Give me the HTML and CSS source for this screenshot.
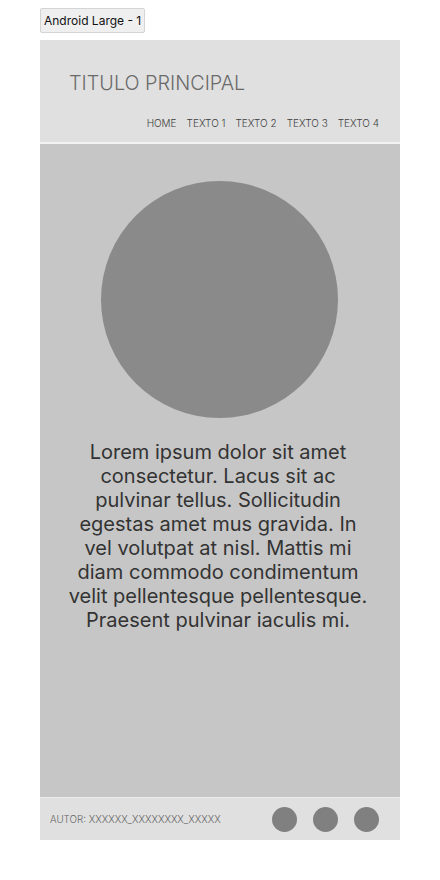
FILE: index.html
```html
<!DOCTYPE html>
<html lang="es">
<head>
<meta charset="utf-8">
<link rel="stylesheet" href="styles.css">
</head>
<body>
<div class="canvas">
  <div class="label">Android Large - 1</div>
  <div class="frame">
    <header class="header">
      <h1 class="title">TITULO PRINCIPAL</h1>
      <nav class="nav">
        <span>HOME</span><span>TEXTO 1</span><span>TEXTO 2</span><span>TEXTO 3</span><span>TEXTO 4</span>
      </nav>
    </header>
    <main class="main">
      <div class="circle"></div>
      <p class="text">Lorem ipsum dolor sit amet consectetur. Lacus sit ac pulvinar tellus. Sollicitudin egestas amet mus gravida. In vel volutpat at nisl. Mattis mi diam commodo condimentum velit pellentesque pellentesque. Praesent pulvinar iaculis mi.</p>
    </main>
    <footer class="footer">
      <span class="author">AUTOR: XXXXXX_XXXXXXXX_XXXXX</span>
      <div class="dots"><span class="dot"></span><span class="dot"></span><span class="dot"></span></div>
    </footer>
  </div>
</div>
</body>
</html>
```
FILE: styles.css
```css
* { box-sizing: border-box; }
html, body { margin: 0; padding: 0; background: #fff; }
body { font-family: Inter, "Noto Sans", sans-serif; }
.canvas { padding: 8px 40px 40px 40px; }
.label {
  display: inline-block;
  height: 25px;
  padding: 0 3px;
  background: #efefef;
  border: 1px solid #d4d4d4;
  border-radius: 2px;
  font-size: 12px;
  line-height: 23px;
  color: #111;
  margin-bottom: 7px;
}
.frame { width: 360px; height: 800px; display: flex; flex-direction: column; }
.header {
  height: 104px;
  flex: none;
  background: #e0e0e0;
  border-bottom: 2px solid #f2f2f2;
  padding: 31px 21px 0 29px;
  display: flex;
  flex-direction: column;
}
.title {
  margin: 0;
  font-weight: 300;
  font-size: 19.8px;
  line-height: 24px;
  color: #6a6a6a;
}
.nav {
  margin-top: 21px;
  display: flex;
  justify-content: flex-end;
  gap: 10px;
  font-size: 10px;
  line-height: 14px;
  color: #3e3e3e;
  font-weight: 300;
}
.main {
  flex: 1;
  background: #c6c6c6;
  display: flex;
  flex-direction: column;
  align-items: center;
  padding-top: 37px;
  border-bottom: 1px solid #ececec;
}
.circle {
  width: 237px;
  height: 237px;
  border-radius: 50%;
  background: #8a8a8a;
  margin-right: 1px;
}
.text {
  margin: 22px 4px 0 0;
  width: 302px;
  text-align: center;
  font-size: 20px;
  line-height: 24px;
  color: #333;
}
.footer {
  height: 42px;
  flex: none;
  background: #e0e0e0;
  display: flex;
  align-items: center;
  justify-content: space-between;
  padding: 0 21px 0 10px;
}
.author { font-size: 9.8px; color: #666; font-weight: 300; }
.dots { display: flex; gap: 16px; }
.dot { width: 25px; height: 25px; border-radius: 50%; background: #808080; }
```
